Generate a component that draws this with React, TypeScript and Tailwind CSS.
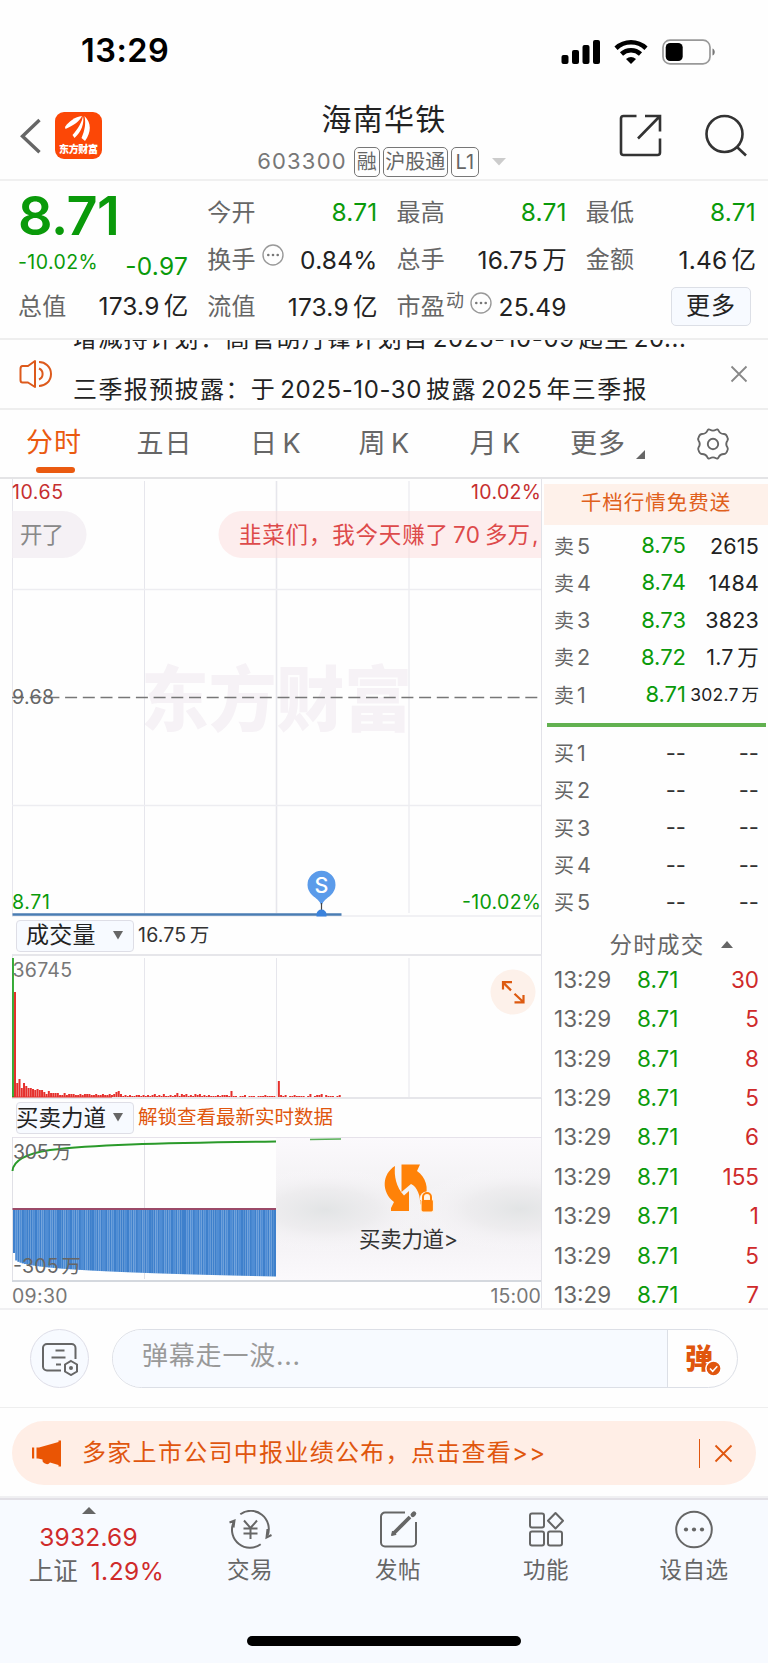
import type { ReactNode } from 'react';

const sells = [
  ['卖5', '8.75', '2615'],
  ['卖4', '8.74', '1484'],
  ['卖3', '8.73', '3823'],
  ['卖2', '8.72', '1.7万'],
  ['卖1', '8.71', '302.7万'],
];

const buys = ['买1', '买2', '买3', '买4', '买5'];

const ticks = [30, 5, 8, 5, 6, 155, 1, 5, 7];

// bar heights in px, one entry per minute
const volumes = [
  105, 14, 18, 9, 14, 11, 9, 9, 8, 7, 8, 7, 7, 5, 3, 6, 4, 4, 4, 4, 2, 2, 4, 2, 3, 3, 3, 2, 2, 3, 2, 3, 3, 3, 2, 2, 3, 2, 2, 3, 2, 2, 3,
  2, 3, 5, 6, 3, 1, 2, 1, 2, 1, 1, 2, 2, 1, 2, 1, 2, 1, 2, 3, 1, 2, 1, 3, 1, 1, 2, 1, 2, 4, 1, 3, 2, 3, 1, 2, 1, 3, 2, 3, 1, 2, 1, 2, 1,
  1, 1, 2, 1, 2, 2, 2, 1, 6, 1, 1, 0, 1, 1, 2, 0, 1, 1, 1, 0, 1, 1, 1, 2, 1, 1, 1, 1, 0, 16, 2, 1, 2, 0, 1, 1, 2, 1, 1, 1, 1, 0, 1, 3,
  0, 1, 2, 2, 3, 0, 2, 1, 1, 1, 0, 1, 2,
];

// adds a little air between latin runs and the chinese characters around them
function Mixed({ text, run = 'tracking-[0.2px]' }: { text: string; run?: string }) {
  return text.split(/([\w.%-]+)/).map((part, i) =>
    i % 2 === 1 ? (
      <span key={i} className={`mx-[0.17em] first:ml-0 last:mr-0 ${run}`}>
        {part}
      </span>
    ) : part ? (
      <span key={i}>{part}</span>
    ) : null
  );
}

function MoreDots() {
  return (
    <svg className="size-[22px] shrink-0" viewBox="0 0 22 22" fill="none">
      <circle cx="11" cy="11" r="10" stroke="#999" strokeWidth="1.4" />
      <circle cx="6.3" cy="11" r="1.3" fill="#777" />
      <circle cx="11" cy="11" r="1.3" fill="#777" />
      <circle cx="15.7" cy="11" r="1.3" fill="#777" />
    </svg>
  );
}

function StatusBar() {
  return (
    <div className="flex h-[90px] items-center justify-between pr-[52px] pl-[81px] pt-[13px] text-black">
      <span className="text-[32.500px] font-semibold tracking-[0.500px]">13:29</span>
      <svg width="155" height="26" viewBox="0 0 155 26">
        <rect x="0.5" y="16" width="7" height="9" rx="2" />
        <rect x="11" y="11" width="7" height="14" rx="2" />
        <rect x="21.5" y="6" width="7" height="19" rx="2" />
        <rect x="32" y="1" width="7" height="24" rx="2" />
        <g fill="none" stroke="#000" strokeWidth="4.6">
          <path d="M55 9.2a22 22 0 0 1 30 0" />
          <path d="M60.5 15a14 14 0 0 1 19 0" />
        </g>
        <path d="M65 20a8 8 0 0 1 10 0l-5 5z" />
        <rect x="102" y="1.2" width="47" height="23.6" rx="7" fill="none" stroke="#999" strokeWidth="1.7" />
        <rect x="104.7" y="4" width="17" height="18" rx="4.5" />
        <path d="M151.5 9.5c3 1 3 6 0 7z" fill="#777" />
      </svg>
    </div>
  );
}

function Tag({ children, className }: { children: ReactNode; className: string }) {
  return (
    <span
      className={`flex h-[30px] items-center justify-center rounded-[5px] border border-[#777] text-[20px] text-[#666] ${className}`}
    >
      {children}
    </span>
  );
}

function Header() {
  return (
    <header className="flex h-[91px] border-b-2 border-[#f0f0f0] pl-[20px] pr-[21px]">
      <div className="flex w-[235px] gap-[14px] pt-[22px]">
        <svg className="mt-[6px]" width="21" height="36" viewBox="0 0 21 36" fill="none" stroke="#666" strokeWidth="3.4">
          <path d="M19.5 2 2.5 18.3l17 16" />
        </svg>
        <svg width="47" height="47" viewBox="0 0 47 47">
          <rect width="47" height="47" rx="9" fill="#fc4706" />
          <g fill="#fff">
            <path d="M10 15C14 9 20 5 27 4 25 9 19 13 10.500 17z" />
            <path d="M17.500 23C23 17 27 10 28 4c1.500 7-1.500 16-8.500 22z" />
            <path d="M26.500 26C30 18 31 11 29.500 4c7 7 7 16 0.500 25z" />
          </g>
          <text x="4" y="41" fontSize="10" fontWeight="900" fill="#fff" textLength="39">
            东方财富
          </text>
        </svg>
      </div>
      <div className="flex w-[258px] flex-col items-center">
        <h1 className="mt-[7px] text-[30px] leading-[44px] tracking-[1.200px] text-[#222]">海南华铁</h1>
        <div className="mt-[4px] flex items-center gap-[3px] pr-[5px] text-[#777]">
          <span className="mr-[4px] text-[22px] tracking-[1.200px]">603300</span>
          <Tag className="w-[26px]">融</Tag>
          <Tag className="w-[65px]">沪股通</Tag>
          <Tag className="w-[28px]">L1</Tag>
          <svg className="ml-[10px]" width="14" height="8">
            <path d="M0 0h14l-7 7.500z" fill="#ccc" />
          </svg>
        </div>
      </div>
      <div className="ml-auto flex gap-[42px] pt-[24px]">
        <svg width="43" height="43" viewBox="0 0 43 43" fill="none" stroke="#333" strokeWidth="2.600">
          <path d="M17.500 2H4.500A2.500 2.500 0 0 0 2 4.500v34A2.500 2.500 0 0 0 4.500 41h34a2.500 2.500 0 0 0 2.500-2.500V24.500M26 2h15v15.500M41 2 19 24.500" />
        </svg>
        <svg width="43" height="43" viewBox="0 0 43 43" fill="none" stroke="#333" strokeWidth="2.600">
          <circle cx="20.500" cy="20" r="18" />
          <path d="m33 33 9 8.500" />
        </svg>
      </div>
    </header>
  );
}

function Quote({ label, value, green, extra }: { label: string; value: string; green?: boolean; extra?: ReactNode }) {
  return (
    <div className="flex h-[47.300px] items-center">
      <span className="text-[24px] tracking-[0.300px] text-[#666]">{label}</span>
      {extra}
      <span
        className={`ml-auto text-[24.500px] whitespace-nowrap ${green ? 'text-[#0a9a0a] tracking-[0.500px]' : 'text-[#222]'}`}
      >
        <Mixed text={value} />
      </span>
    </div>
  );
}

function Quotes() {
  return (
    <section className="grid h-[159px] grid-cols-4 gap-x-[19px] border-b-2 border-[#eee] pt-[8px] pr-[12px] pl-[18px]">
      <div>
        <div className="h-[54px] text-[54px] leading-[54px] font-semibold tracking-[-0.500px] text-[#0a9a0a]">8.71</div>
        <div className="flex h-[40px] items-center justify-between text-[#0a9a0a]">
          <span className="text-[19.500px] tracking-[0.400px]">-10.02%</span>
          <span className="mt-[7px] text-[24.500px] tracking-[0.300px]">-0.97</span>
        </div>
        <Quote label="总值" value="173.9亿" />
      </div>
      <div>
        <Quote label="今开" value="8.71" green />
        <Quote label="换手" value="0.84%" extra={<span className="mb-[10px] ml-[6px]"><MoreDots /></span>} />
        <Quote label="流值" value="173.9亿" />
      </div>
      <div>
        <Quote label="最高" value="8.71" green />
        <Quote label="总手" value="16.75万" />
        <Quote
          label="市盈"
          value="25.49"
          extra={
            <>
              <span className="mb-[14px] ml-[1px] text-[18px] text-[#666]">动</span>
              <span className="mb-[8px] ml-[6px]"><MoreDots /></span>
            </>
          }
        />
      </div>
      <div>
        <Quote label="最低" value="8.71" green />
        <Quote label="金额" value="1.46亿" />
        <button className="mt-[3px] mr-[5px] ml-auto flex h-[39px] w-[80px] items-center justify-center rounded-[5px] border border-[#dcdfe6] bg-[#f7faff] text-[24px] tracking-[1px] text-[#222]">
          更多
        </button>
      </div>
    </section>
  );
}

function News() {
  return (
    <section className="flex h-[70px] items-center border-b-2 border-[#eee] pr-[20px] pl-[19px]">
      <svg width="35" height="30" viewBox="0 0 35 30" fill="none" stroke="#dd5a1c" strokeWidth="2">
        <path d="M16 2v26l-7-4.500H3.500Q1.500 23.500 1.500 21V10Q1.500 7 3.500 7H9z" strokeLinejoin="round" />
        <path d="M20 9.500a6 6 0 0 1 0 11M20 3c6 0 12 4.500 12 12s-6 12-12 12" />
      </svg>
      <div className="ml-[19px] h-[68px] flex-1 overflow-hidden text-[24px] leading-[51px] tracking-[1.400px] whitespace-nowrap text-[#222]">
        <div className="-mt-[27px]">
          <Mixed text="增减持计划：高管胡丹锋计划自2025-10-09起至20..." run="tracking-[0.6px]" />
        </div>
        <div>
          <Mixed text="三季报预披露：于2025-10-30披露2025年三季报" run="tracking-[0.6px]" />
        </div>
      </div>
      <svg width="18" height="18" viewBox="0 0 18 18" stroke="#888" strokeWidth="1.800">
        <path d="m1.500 1.500 15 15M16.500 1.500l-15 15" />
      </svg>
    </section>
  );
}

function Tabs() {
  return (
    <nav className="flex h-[69px] items-center border-b-2 border-[#e4e4e6] text-[27px] tracking-[1px] text-[#666]">
      <div className="flex w-[110px] flex-col items-center pt-[5px] text-[#ea5a10]">
        <span className="-ml-[2px] leading-[46px]">分时</span>
        <span className="mt-[1px] h-[6px] w-[39px] rounded-full bg-[#ea5a10]" />
      </div>
      <span className="mt-px w-[109px] text-center">五日</span>
      <span className="mt-px w-[113px] text-center"><Mixed text="日K" /></span>
      <span className="mt-px w-[104px] text-center"><Mixed text="周K" /></span>
      <span className="mt-px w-[118px] text-center"><Mixed text="月K" /></span>
      <span className="mt-px ml-[16px]">更多</span>
      <svg className="mt-[21px] ml-[10px]" width="9" height="9">
        <path d="M9 0v9H0z" fill="#666" />
      </svg>
      <svg className="ml-[51px]" width="34" height="34" viewBox="0 0 34 34" fill="none" stroke="#666" strokeWidth="1.900">
        <path
          d="M11.500 3.500Q12.500 1.800 14 2.700q3 1.800 6 0Q21.500 1.800 22.500 3.500q1.500 3.500 5.500 3.500 2 0 3 2.500 1.500 2.500.5 4-2.500 3.500 0 7 1 1.500-.5 4-1 2.500-3 2.500-4 0-5.500 3.500-1 1.700-2.500.8-3-1.800-6 0-1.500.9-2.500-.8Q10 27 6 27q-2 0-3-2.500-1.500-2.500-.5-4 2.500-3.500 0-7-1-1.500.5-4Q4 7 6 7q4 0 5.500-3.500z"
          strokeLinejoin="round"
        />
        <circle cx="17" cy="17" r="5.200" />
      </svg>
    </nav>
  );
}

function PriceChart() {
  return (
    <svg className="block" width="542" height="438" viewBox="0 0 542 438">
      <text x="141" y="246" fontSize="71" fontWeight="900" fill="#f6f2f6" textLength="271" lengthAdjust="spacingAndGlyphs">
        东方财富
      </text>
      <g stroke="#e6e6ec">
        <path d="M12.500 0v438M144.500 2v432M409 2v432" />
        <path d="M276.500 2v432" strokeWidth="1.600" />
        <path d="M12 110.500h530M12 326.500h530M12 437h530" stroke="#ededf1" strokeWidth="1.500" />
      </g>
      <path d="M12 218.500h526" stroke="#777" strokeWidth="1.500" strokeDasharray="12 5.700" />
      <g fontSize="19.500">
        <text x="12" y="19.500" textLength="51" fill="#c62f2f">10.65</text>
        <text x="541" y="19.500" textLength="70" textAnchor="end" fill="#c62f2f">10.02%</text>
        <text x="12" y="224.500" textLength="42" fill="#666">9.68</text>
        <text x="12" y="430" textLength="38" fill="#0a9a0a">8.71</text>
        <text x="541" y="430" textLength="79" textAnchor="end" fill="#0a9a0a">-10.02%</text>
      </g>
      {/* bullet comments */}
      <path d="M12 32h51a23.300 23.300 0 0 1 0 47H12z" fill="#f3eef3" fillOpacity="0.800" />
      <path d="M541 32H242a23.300 23.300 0 0 0 0 47h299z" fill="#fcdada" fillOpacity="0.450" />
      <text x="20" y="64" fontSize="22.500" fill="#888" textLength="44">开了</text>
      <g fontSize="22.500" fill="#dd4a4a">
        <text x="239" y="64" textLength="209">韭菜们，我今天赚了</text>
        <text x="453" y="64" textLength="27">70</text>
        <text x="485" y="64" textLength="45">多万</text>
        <text x="532" y="64">,</text>
      </g>
      <path d="M12.500 435.500h329" stroke="#4a7db3" strokeWidth="2.600" />
      <path d="M321.500 427c-2-6-5-7-9.500-11a14 14 0 1 1 19 0c-4.500 4-7.500 5-9.500 11z" fill="#5b9bea" />
      <path d="M321.500 424v8" stroke="#444" strokeWidth="1.200" />
      <path d="M316.500 437.500v-2a5 5 0 0 1 10 0v2z" fill="#3a82dc" />
      <text x="321.500" y="413.500" fontSize="21.500" fontWeight="500" fill="#fff" textAnchor="middle">S</text>
      <path d="M541.500 0v438" stroke="#e2e2e8" />
    </svg>
  );
}

function Selector({ label, className, children }: { label: string; className: string; children: ReactNode }) {
  return (
    <div className="flex items-center border-r border-[#e2e2e8] pl-[16px]">
      <div className="flex h-[32px] w-[118px] items-center justify-between rounded-[4px] border border-[#dedee6] bg-[#f7faff] pr-[10px]">
        <span className={`whitespace-nowrap text-[#222] ${className}`}>{label}</span>
        <svg width="10" height="9">
          <path d="M0 0h10L5 8.500z" fill="#666" />
        </svg>
      </div>
      {children}
    </div>
  );
}

function VolumeChart() {
  return (
    <svg className="block" width="542" height="145" viewBox="0 0 542 145">
      <path d="M12 1h530M12 144h530" stroke="#dedee4" strokeWidth="1.600" />
      <path d="M12.500 1v143M144.500 4v139M276.500 4v139M409 4v139M541.500 0v145" stroke="#e6e6ec" />
      {volumes.map((h, i) => (
        <rect key={i} x={14 + i * 2.255} y={143 - h} width="2" height={h} fill="#e5302c" />
      ))}
      <path d="M12 143h100" stroke="#e5302c" />
      <path d="M13 4v139" stroke="#0a9a0a" strokeWidth="1.600" />
      <text x="12.500" y="22.500" fontSize="19.500" fill="#777" textLength="59.500">36745</text>
      <circle cx="513" cy="38" r="22.500" fill="#fdf1ea" />
      <path
        d="M503 35.500V28.200H512M503 28.400l8 8M523.500 41v7.300H514.500M523.300 48l-8.800-8.300"
        fill="none"
        stroke="#dd5a10"
        strokeWidth="2.200"
      />
    </svg>
  );
}

// lower edge of the sell pressure area
function depth(t: number) {
  return 116 + 23.5 * Math.pow(t, 0.24);
}

function PowerChart() {
  return (
    <svg className="block" width="542" height="146" viewBox="0 0 542 146">
      <defs>
        <radialGradient id="haze">
          <stop offset="0" stopColor="#e2e4e5" />
          <stop offset="0.5" stopColor="#ecebed" stopOpacity="0.8" />
          <stop offset="1" stopColor="#fbf9fc" stopOpacity="0" />
        </radialGradient>
        <linearGradient id="band" x2="0" y2="1">
          <stop offset="0" stopColor="#fbf9fc" />
          <stop offset="0.4" stopColor="#f2f1f3" />
          <stop offset="0.7" stopColor="#f4f2f5" />
          <stop offset="1" stopColor="#fbf9fc" />
        </linearGradient>
        <clipPath id="locked">
          <path d="M276 1h265v142H276z" />
        </clipPath>
      </defs>
      <path d="M12 0.500h530" stroke="#e6e2ea" />
      <path d="M12.500 0v143M144.500 3v139" stroke="#e0e0e6" />
      {Array.from({ length: 120 }, (_, i) => (
        <rect
          key={i}
          x={13 + i * 2.192}
          y="72"
          width="2.200"
          height={depth(i / 119) - 72}
          fill={i % 2 === 0 || i % 7 === 0 ? '#3e80cc' : '#4f8dd5'}
        />
      ))}
      <path d="M12.500 72H276" stroke="#9a4a68" strokeWidth="2" />
      <path d="M12.500 34C13 25 24 17 50 13 90 8 150 6 276 4.500" fill="none" stroke="#2a9a2a" strokeWidth="2" />
      <g clipPath="url(#locked)">
        <path d="M276 1h265v142H276z" fill="url(#band)" />
        <ellipse cx="325" cy="73" rx="105" ry="42" fill="url(#haze)" />
        <ellipse cx="520" cy="72" rx="105" ry="42" fill="url(#haze)" />
      </g>
      <path d="M310 2.500 341 2" stroke="#56ae56" strokeWidth="1.500" />
      <g fill="#ff8208">
        <path d="M395 29C382 37 381 55 394 65l-3 6v3h18V54l-5 4.500C396 50 394 39 395 29z" />
        <path d="M401.500 27.500H420l-3 6.500c9 6 12 18 8 26l-5 8c1-8-3-19-9-21l-9.500 8z" />
        <path d="M420 63v-2a6.500 6.500 0 0 1 13 0v2z" fill="#fff6ea" />
        <rect x="421" y="62.500" width="12.500" height="12.500" rx="2" stroke="#fff0dd" strokeWidth="1.200" />
        <path d="M423 63v-3a4 4 0 0 1 8 0v3" fill="none" stroke="#ff8208" strokeWidth="2" />
      </g>
      <text x="359" y="110" fontSize="21.500" fill="#333" textLength="99">买卖力道&gt;</text>
      <g fontSize="19.500" fill="#666">
        <text x="13" y="21.500" textLength="35.500">305</text>
        <text x="52" y="21.500">万</text>
        <text x="13" y="135.500" textLength="45.500">-305</text>
        <text x="61.500" y="135.500">万</text>
      </g>
      <path d="M12 144h530" stroke="#d4d8de" strokeWidth="1.800" />
      <path d="M541.500 0v146" stroke="#e2e2e8" />
    </svg>
  );
}

function OrderBook() {
  return (
    <aside className="w-[226px] shrink-0 text-[22px] text-[#666]">
      <div className="mt-[5px] ml-[2px] flex h-[41px] items-center justify-center bg-[#fef1ea] pb-[3px] text-[20.500px] tracking-[1px] text-[#e0601c]">
        千档行情免费送
      </div>
      <div className="mt-[2px] pr-[9px] pl-[12px]">
        {sells.map(([label, price, amount]) => (
          <div key={label} className="flex h-[37.300px] items-center">
            <span className="w-[50px] text-[20px]">
              {label[0]}
              <span className="ml-[3px] text-[21.500px]">{label[1]}</span>
            </span>
            <span className="w-[82px] text-right text-[22px]  text-[#0a9a0a]">{price}</span>
            <span
              className={`flex-1 text-right whitespace-nowrap text-[#222] ${amount.length > 5 ? 'text-[17.500px]' : 'text-[21.500px] tracking-[0.200px]'}`}
            >
              <Mixed text={amount} />
            </span>
          </div>
        ))}
      </div>
      <div className="mt-[10px] mr-[2px] ml-[5px] h-[4px] bg-[#62b150]" />
      <div className="mt-[7px] pr-[9px] pl-[12px]">
        {buys.map((label) => (
          <div key={label} className="flex h-[37.300px] items-center">
            <span className="w-[50px] text-[20px]">
              {label[0]}
              <span className="ml-[3px] text-[21.500px]">{label[1]}</span>
            </span>
            <span className="w-[82px] text-right text-[#333]">--</span>
            <span className="flex-1 text-right text-[#333]">--</span>
          </div>
        ))}
      </div>
      <div className="flex h-[39px] items-center justify-center gap-[17px] pt-[8px] pl-[36px]">
        <span className="text-[22.500px] tracking-[1.200px]">分时成交</span>
        <svg className="mr-[3px]" width="12" height="7">
          <path d="M0 7h12L6 0z" fill="#666" />
        </svg>
      </div>
      <div className="pr-[9px] pl-[12px]">
        {ticks.map((n, i) => (
          <div key={i} className="flex h-[39.400px] items-center text-[22.500px]">
            <span className="w-[83px]">13:29</span>
            <span className="text-[#0a9a0a]">8.71</span>
            <span className="flex-1 text-right text-[#cf2a2a]">{n}</span>
          </div>
        ))}
      </div>
    </aside>
  );
}

function CommentBar() {
  return (
    <section className="flex h-[98px] items-center border-b border-[#eee] pr-[30px] pl-[30px]">
      <div className="flex size-[59px] items-center justify-center rounded-full border border-[#dedee8] bg-[#f7faff]">
        <svg width="38" height="34" viewBox="0 0 38 34" fill="none" stroke="#666" strokeWidth="2">
          <path d="M20 28.500H6a4 4 0 0 1-4-4V6a4 4 0 0 1 4-4h24.500a4 4 0 0 1 4 4v11" />
          <path d="M14.500 8.500h9M10.500 15.500h14M15 22.500h5" />
          <path d="m30 19 6 3.500v7L30 33l-6-3.500v-7z" />
          <circle cx="30" cy="26" r="1" fill="#666" />
        </svg>
      </div>
      <div className="ml-[23px] flex h-[59px] flex-1 overflow-hidden rounded-full border border-[#dcdfe6]">
        <div className="flex flex-1 items-center border-r border-[#dcdfe6] bg-[#f7faff] pb-[6px] pl-[29px] text-[26px] tracking-[0.800px] text-[#999]">
          弹幕走一波...
        </div>
        <div className="flex w-[69px] items-center pl-[17px]">
          <div className="relative text-[28px] leading-[32px] font-black text-[#e0560e]">
            弹
            <svg className="absolute top-[17px] left-[20px]" width="17" height="17" viewBox="0 0 17 17">
              <circle cx="8.500" cy="8.500" r="7.600" fill="#e0560e" stroke="#fff" strokeWidth="1.500" />
              <path d="m5 8.500 2.700 2.800 4.600-5" fill="none" stroke="#fff" strokeWidth="1.500" />
            </svg>
          </div>
        </div>
      </div>
    </section>
  );
}

function Notice() {
  return (
    <section className="px-[12px] pt-[13px] pb-[11px]">
      <div className="flex h-[64px] items-center rounded-full bg-[#ffeee6] pr-[23px] pl-[19px] text-[#e0560e]">
        <svg width="31" height="28" viewBox="0 0 31 28" fill="#ea5504">
          <path d="M1 8.500h2.200v11H1zM5.500 8.500h1.500v11h-1.500zM8 8.500 27.500 3V1.500H30v26h-2.500V26L19 23.500q-2 3-6 .5-2-1.500-1.500-3.500L7 19.500v-11z" />
        </svg>
        <span className="ml-[20px] text-[24px] tracking-[1.300px]">多家上市公司中报业绩公布，点击查看&gt;&gt;</span>
        <span className="mr-[14px] ml-auto h-[29px] w-[1.500px] bg-[#e0560e]" />
        <svg width="19" height="19" viewBox="0 0 19 19" stroke="#e0560e" strokeWidth="1.800">
          <path d="m1.500 1.500 16 16M17.500 1.500l-16 16" />
        </svg>
      </div>
    </section>
  );
}

function NavItem({ label, children }: { label: string; children: ReactNode }) {
  return (
    <div className="flex w-[148px] flex-col items-center pt-[10px]">
      <svg width="44" height="42" viewBox="0 0 44 42" fill="none" stroke="#666" strokeWidth="2">
        {children}
      </svg>
      <span className="mt-[2px] text-[22.500px] leading-[32px] tracking-[0.500px]">{label}</span>
    </div>
  );
}

function BottomNav() {
  return (
    <footer className="h-[169px] border-t-2 border-[#e2e0e6] bg-[#f7faff] text-[#666]">
      <div className="flex h-[136px]">
        <div className="flex w-[176px] flex-col items-center pt-[7px] pl-[1px]">
          <svg width="14" height="7">
            <path d="M0 7h14L7 0z" fill="#666" />
          </svg>
          <span className="mt-[6px] text-[24.500px] leading-[34px] tracking-[0.200px] text-[#cf2a2a]">3932.69</span>
          <div className="flex items-center gap-[13px] pl-[16px] text-[24.500px] leading-[34px]">
            <span>上证</span>
            <span className="tracking-[0.500px] text-[#cf2a2a]">1.29%</span>
          </div>
        </div>
        <NavItem label="交易">
          <path d="M12.300 4.200A18 18 0 0 1 39.500 25.500M32.700 34.200A18 18 0 0 1 5.300 13" />
          <path d="M1.500 12.500 6.500 10.500 5.500 17.500M43.500 25 38.500 27.500 39.500 19" />
          <path d="m16 10.500 6.500 7.500 6.500-7.500M22.500 18V29M15.500 18.500h14M15.500 23.500h14" />
        </NavItem>
        <NavItem label="发帖">
          <path d="M29 2.500H9a4 4 0 0 0-4 4v26a4 4 0 0 0 4 4h27a4 4 0 0 0 4-4V12" />
          <path d="m17.500 23.500 16.500-16.500" strokeWidth="3.800" />
          <path d="m15.500 25.500 1-4.500 3.500 3.500z" fill="#666" strokeWidth="1" />
          <path d="m36.800 4.800 1.200-1.200" strokeWidth="4.500" strokeLinecap="round" />
        </NavItem>
        <NavItem label="功能">
          <rect x="6" y="3.500" width="14" height="14" rx="2" />
          <rect x="6" y="21.500" width="14" height="14" rx="2" />
          <rect x="24" y="21.500" width="14" height="14" rx="2" />
          <path d="m31.500 3 7.500 7.800-7.500 7.700-7.500-7.700z" strokeLinejoin="round" />
        </NavItem>
        <NavItem label="设自选">
          <circle cx="22" cy="19.500" r="17.800" />
          <g fill="#666" stroke="none">
            <circle cx="14" cy="19.500" r="2.100" />
            <circle cx="22" cy="19.500" r="2.100" />
            <circle cx="30" cy="19.500" r="2.100" />
          </g>
        </NavItem>
      </div>
      <div className="mx-auto h-[10px] w-[274px] rounded-full bg-black" />
    </footer>
  );
}

export default function App() {
  return (
    <main className="h-[1663px] w-[768px] overflow-hidden bg-[#fefefe] font-['Inter','Noto_Sans_CJK_SC',sans-serif] leading-normal">
      <StatusBar />
      <Header />
      <Quotes />
      <News />
      <Tabs />
      <div className="flex h-[831px] border-b-2 border-[#f0f0f2]">
        <div className="grid w-[542px] grid-rows-[438px_37px_144px_39px_145px_26px]">
          <PriceChart />
          <Selector label="成交量" className="pl-[9px] text-[23px] tracking-[0.300px]">
            <span className="ml-[4px] text-[19.500px] text-[#333]">
              <Mixed text="16.75万" />
            </span>
          </Selector>
          <VolumeChart />
          <Selector label="买卖力道" className="-ml-px text-[22.500px]">
            <span className="ml-[4px] text-[19.500px] text-[#e0560e]">解锁查看最新实时数据</span>
          </Selector>
          <PowerChart />
          <div className="flex items-center justify-between border-r border-[#e2e2e8] pt-[4px] pl-[12px] text-[19.500px] text-[#777]">
            <span className="tracking-[0.300px]">09:30</span>
            <span className="tracking-[0.100px]">15:00</span>
          </div>
        </div>
        <OrderBook />
      </div>
      <CommentBar />
      <Notice />
      <div className="h-[2px] bg-[#f0f0f2]" />
      <BottomNav />
    </main>
  );
}
